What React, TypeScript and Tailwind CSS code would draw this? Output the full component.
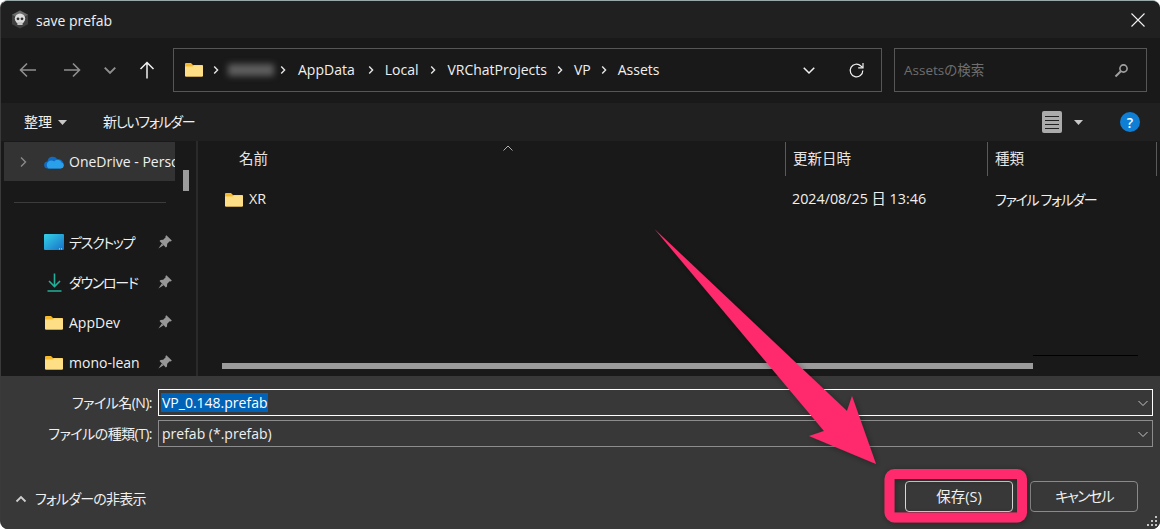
import React from "react";

function Folder({ w = 18, h = 15 }: { w?: number; h?: number }) {
  return (
    <svg className="shrink-0" width={w} height={h} viewBox="0 0 18 15">
      <path d="M0 2a1 1 0 0 1 1-1h5l2 2h9a1 1 0 0 1 1 1v9.5a1 1 0 0 1-1 1H1a1 1 0 0 1-1-1z" fill="#f5b92e" />
      <path d="M0 4.5h7.5L9 3.2h8a1 1 0 0 1 1 1v9.3a1 1 0 0 1-1 1H1a1 1 0 0 1-1-1z" fill="#ffdf85" />
    </svg>
  );
}

function PinIcon() {
  return (
    <svg className="shrink-0" width="14" height="14" viewBox="0 0 14 14">
      <path d="M8.4 0.2 13.8 5.6 12.8 6.6 11.7 6.3 9.2 8.8 9 11.4 7.9 12.5 1.5 6.1 2.6 5 5.2 4.8 7.7 2.3 7.4 1.2z" fill="#979797" />
      <path d="M3.8 8.4 0.4 13.6 5.6 10.2z" fill="#979797" />
    </svg>
  );
}

function Chevron({ dir = "down", size = 12, color = "#c8c8c8", sw = 1.2 }: { dir?: "down" | "up" | "right"; size?: number; color?: string; sw?: number }) {
  const d = dir === "down" ? "M1.5 4 6 8.5 10.5 4" : dir === "up" ? "M1.5 8.5 6 4 10.5 8.5" : "M4 1.5 8.5 6 4 10.5";
  return (
    <svg className="shrink-0" width={size} height={size} viewBox="0 0 12 12" fill="none" stroke={color} strokeWidth={sw}>
      <path d={d} />
    </svg>
  );
}

function Crumb({ children }: { children: React.ReactNode }) {
  return <span className="text-[14px] text-[#f0f0f0]">{children}</span>;
}

function Sep() {
  return (
    <span className="flex h-[10px] w-[6px] items-center justify-center">
      <svg width="6" height="10" viewBox="0 0 6 10" fill="none" stroke="#e6e6e6" strokeWidth="1.4">
        <path d="M1.2 1.5 4.6 5 1.2 8.5" />
      </svg>
    </span>
  );
}

function NavRow({ icon, label, kana }: { icon: React.ReactNode; label: string; kana?: boolean }) {
  return (
    <div className="flex h-[40px] items-center pl-[43px] pr-[4px]">
      <span className="flex w-[20px] justify-center">{icon}</span>
      <span className={`ml-[5px] w-[89px] whitespace-nowrap text-[14px] text-[#f0f0f0] [font-feature-settings:'palt'] ${kana ? "tracking-[-1.3px]" : ""}`}>{label}</span>
      <PinIcon />
    </div>
  );
}

function Field({ label, children, focused }: { label: string; children: React.ReactNode; focused?: boolean }) {
  return (
    <div className="flex h-[27px] items-center">
      <span className="w-[153px] whitespace-nowrap pr-[2px] text-right text-[14px] tracking-[-0.55px] text-[#f0f0f0] [font-feature-settings:'palt']">{label}</span>
      <div className={`ml-[4px] flex h-[27px] w-[995px] items-center justify-between border pl-[2px] pr-[3px] ${focused ? "border-white" : "border-[#8c8c8c]"}`}>
        {children}
        <Chevron size={12} color="#c4c4c4" sw={1} />
      </div>
    </div>
  );
}

export default function App() {
  return (
    <div
      className="relative flex h-[529px] w-[1160px] flex-col overflow-hidden rounded-[8px] border-t border-l border-t-[#9aa8a8] border-l-[#3a3a3a] bg-[#202020] text-white"
      style={{ fontFamily: '"Open Sans","Noto Sans","Noto Sans CJK JP",sans-serif' }}
    >
      {/* Title bar */}
      <div className="flex h-[37px] shrink-0 items-center bg-[#202020] pl-[10px] pr-[15px]">
        <svg width="18" height="19" viewBox="0 0 18 19">
          <path d="M9 0.5 17 4.8v9.4l-8 4.3-8-4.3V4.8z" fill="#3f3f3f" />
          <path d="M9 0.5 17 4.8 9 9 1 4.8z" fill="#6a6a6a" />
          <circle cx="9" cy="8.6" r="5.2" fill="#dcdcdc" />
          <rect x="6.4" y="12" width="5.2" height="3" fill="#c8c8c8" />
          <circle cx="7" cy="8.8" r="1.4" fill="#2f2f2f" />
          <circle cx="11" cy="8.8" r="1.4" fill="#2f2f2f" />
        </svg>
        <span className="ml-[7px] pt-[2px] text-[14px] text-[#f0f0f0]">save prefab</span>
        <svg className="ml-auto" width="14" height="14" viewBox="0 0 14 14" fill="none" stroke="#f0f0f0" strokeWidth="1.1">
          <path d="M0.5 0.5 13.5 13.5M13.5 0.5 0.5 13.5" />
        </svg>
      </div>

      {/* Navigation */}
      <div className="flex h-[65px] shrink-0 items-center bg-[#191919] pb-[1px] pl-[18px]">
        <svg className="shrink-0" width="18" height="16" viewBox="0 0 18 16" fill="none" stroke="#8f8f8f" strokeWidth="1.6"><path d="M17 8H1.5M8 1.5 1.5 8 8 14.5" /></svg>
        <svg className="ml-[26px] shrink-0" width="18" height="16" viewBox="0 0 18 16" fill="none" stroke="#8f8f8f" strokeWidth="1.6"><path d="M1 8h15.5M10 1.5 16.5 8 10 14.5" /></svg>
        <span className="ml-[22px]"><Chevron size={14} color="#8f8f8f" sw={1.7} /></span>
        <svg className="ml-[22px] shrink-0" width="16" height="18" viewBox="0 0 16 18" fill="none" stroke="#f0f0f0" strokeWidth="1.5"><path d="M8 17.5V1.5M1.5 8 8 1.5 14.5 8" /></svg>

        <div className="ml-[18px] flex h-[44px] w-[709px] shrink-0 items-center border border-[#565656] pl-[11px] pr-[16px]">
          <span className="flex items-center pb-[2px]"><Folder /></span>
          <span className="ml-[10px]"><Sep /></span>
          <span className="ml-[9px] h-[12px] w-[46px] bg-[#5e5e5e] blur-[3px]" />
          <span className="ml-[6px]"><Sep /></span>
          <span className="ml-[12px] pb-[3px]"><Crumb>AppData</Crumb></span>
          <span className="ml-[13px]"><Sep /></span>
          <span className="ml-[11px] pb-[3px]"><Crumb>Local</Crumb></span>
          <span className="ml-[12px]"><Sep /></span>
          <span className="ml-[11px] pb-[3px]"><Crumb>VRChatProjects</Crumb></span>
          <span className="ml-[10px]"><Sep /></span>
          <span className="ml-[11px] pb-[3px]"><Crumb>VP</Crumb></span>
          <span className="ml-[10px]"><Sep /></span>
          <span className="ml-[11px] pb-[3px]"><Crumb>Assets</Crumb></span>
          <span className="ml-auto"><Chevron size={14} color="#f0f0f0" sw={1.3} /></span>
          <svg className="ml-[32px] shrink-0" width="17" height="17" viewBox="0 0 17 17" fill="none" stroke="#f0f0f0" strokeWidth="1.2">
            <path d="M14.8 8.5a6.3 6.3 0 1 1-1.9-4.5L15 5.6" />
            <path d="M15 1v4.8h-4.8" />
          </svg>
        </div>

        <div className="ml-[12px] flex h-[44px] w-[253px] shrink-0 items-center border border-[#565656] pl-[9px] pr-[17px]">
          <span className="text-[13.5px] text-[#6e6e6e] [font-feature-settings:'palt']">Assetsの検索</span>
          <svg className="ml-auto" width="15" height="15" viewBox="0 0 15 15" fill="none" stroke="#a0a0a0" strokeWidth="1.6">
            <circle cx="9.5" cy="5.5" r="3.6" />
            <path d="M6.8 8.2 1.5 13.5" strokeWidth="2" />
          </svg>
        </div>
      </div>

      {/* Toolbar */}
      <div className="flex h-[38px] shrink-0 items-center bg-[#202020] pl-[23px] pr-[20px]">
        <span className="pb-[2px] text-[14px] text-[#f0f0f0]">整理</span>
        <svg className="ml-[6px]" width="9" height="5" viewBox="0 0 9 5"><path d="M0 0h9L4.5 5z" fill="#c8c8c8" /></svg>
        <span className="ml-[36px] pb-[2px] text-[14px] tracking-[-1.25px] text-[#f0f0f0] [font-feature-settings:'palt']">新しいフォルダー</span>
        <span className="ml-auto flex h-[22px] w-[20px] flex-col items-center justify-center gap-[3px] rounded-[2px] bg-[#ababab]">
          <span className="h-[1px] w-[14px] bg-[#222]" />
          <span className="h-[1px] w-[14px] bg-[#222]" />
          <span className="h-[1px] w-[14px] bg-[#222]" />
          <span className="h-[1px] w-[14px] bg-[#222]" />
        </span>
        <svg className="ml-[12px]" width="9" height="5" viewBox="0 0 9 5"><path d="M0 0h9L4.5 5z" fill="#c8c8c8" /></svg>
        <span className="ml-[37px] flex h-[20px] w-[20px] items-center justify-center rounded-full bg-[#0f7fd6] text-[14px] font-semibold text-white">?</span>
      </div>

      {/* Content */}
      <div className="flex h-[235px] shrink-0 bg-[#191919]">
        {/* Sidebar */}
        <div className="flex w-[197px] shrink-0 border-r-2 border-r-[#2a2a2a]">
          <div className="w-[175px] shrink-0 overflow-hidden">
            <div className="ml-[3px] mt-[1px] flex h-[39px] w-[171px] items-center overflow-hidden bg-[#333333] pl-[13px]">
              <span className="w-[27px] shrink-0"><Chevron dir="right" size={12} color="#8a8a8a" sw={1.4} /></span>
              <svg className="shrink-0" width="20" height="14" viewBox="0 0 20 14">
                <path d="M4 13.5a3.5 3.5 0 0 1-.6-7A5.5 5.5 0 0 1 13.6 4.4 4 4 0 0 1 16 13.5z" fill="#0f6cc4" />
                <path d="M4.5 13.5h12.5a3 3 0 0 0 .6-5.9 4.2 4.2 0 0 0-7.5-1.1A3.4 3.4 0 0 0 4.5 13.5z" fill="#2aa0ea" />
              </svg>
              <span className="ml-[5px] whitespace-nowrap text-[14px] text-[#f0f0f0]">OneDrive - Personal</span>
            </div>
            <div className="ml-[13px] mt-[21px] h-[1px] w-[152px] bg-[#3c3c3c]" />
            <div className="mt-[19px]">
              <NavRow
                kana
                label="デスクトップ"
                icon={
                  <svg width="20" height="16" viewBox="0 0 20 16">
                    <defs>
                      <linearGradient id="dk" x1="0" y1="0" x2="1" y2="1">
                        <stop offset="0" stopColor="#35d3e6" />
                        <stop offset="1" stopColor="#1670c8" />
                      </linearGradient>
                    </defs>
                    <rect width="20" height="16" rx="1" fill="url(#dk)" />
                    <rect x="15" y="14.4" width="1" height="1" fill="#bfeaff" />
                    <rect x="17" y="14.4" width="1" height="1" fill="#bfeaff" />
                  </svg>
                }
              />
              <NavRow
                kana
                label="ダウンロード"
                icon={
                  <svg width="15" height="19" viewBox="0 0 15 19" fill="none" stroke="#21b09a" strokeWidth="1.6">
                    <path d="M7.5 0.5V13M2 8l5.5 5.5L13 8M0.5 18h14" />
                  </svg>
                }
              />
              <NavRow label="AppDev" icon={<Folder />} />
              <NavRow label="mono-lean" icon={<Folder />} />
            </div>
          </div>
          <div className="flex flex-1 justify-center pt-[29px]">
            <span className="h-[21px] w-[6px] bg-[#9b9b9b]" />
          </div>
        </div>

        {/* File list */}
        <div className="relative flex min-w-0 flex-1 flex-col pt-[1px]">
          <span className="absolute left-[304px] top-[1px]"><Chevron dir="up" size={12} color="#b0b0b0" sw={1} /></span>
          <div className="flex h-[34px] shrink-0 text-[14.5px] text-[#e6e6e6]">
            <div className="flex w-[587px] items-center pl-[41px]">名前</div>
            <div className="flex w-[202px] items-center border-l border-l-[#5a5a5a] pl-[7px]">更新日時</div>
            <div className="flex w-[170px] items-center border-x border-x-[#5a5a5a] pl-[7px]">種類</div>
          </div>
          <div className="mt-[8px] flex h-[30px] items-center text-[14.3px] text-[#f0f0f0]">
            <div className="flex w-[587px] items-center pl-[27px]">
              <Folder />
              <span className="ml-[6px]">XR</span>
            </div>
            <div className="w-[202px] pl-[7px]">2024/08/25 日 13:46</div>
            <div className="pl-[8px] text-[14px] tracking-[-1.3px] [font-feature-settings:'palt']">ファイル フォルダー</div>
          </div>
          <div className="relative mb-[7px] mt-auto h-[6px]">
            <span className="absolute left-[24px] top-0 h-[6px] w-[811px] bg-[#9b9b9b]" />
            <span className="absolute -top-[8px] left-[835px] h-[1px] w-[105px] bg-[#000000]" />
          </div>
        </div>
      </div>

      {/* Bottom panel */}
      <div className="relative flex flex-1 flex-col bg-[#383838] pt-[13px]">
        <div className="flex flex-col gap-[4px]">
          <Field label="ファイル名(N):" focused>
            <span className="bg-[#0063b8] px-[1px] text-[14px] leading-[19px] text-white">VP_0.148.prefab</span>
          </Field>
          <Field label="ファイルの種類(T):">
            <span className="pl-[1px] text-[14px] text-[#f0f0f0]">prefab (*.prefab)</span>
          </Field>
        </div>
        <div className="mt-auto flex items-end justify-between pb-[17px] pl-[14px] pr-[22px]">
          <div className="flex items-center pb-[3px]">
            <Chevron dir="up" size={12} color="#d0d0d0" sw={1.8} />
            <span className="ml-[8px] text-[14px] tracking-[-0.8px] text-[#f0f0f0] [font-feature-settings:'palt']">フォルダーの非表示</span>
          </div>
          <div className="flex gap-[17px]">
            <button className="h-[31px] w-[108px] rounded-[4px] border border-[#d8d8d8] text-[14.5px] text-[#f0f0f0]">保存(S)</button>
            <button className="h-[31px] w-[108px] rounded-[4px] border border-[#8a8a8a] text-[14.5px] tracking-[-1.6px] text-[#f0f0f0] [font-feature-settings:'palt']">キャンセル</button>
          </div>
        </div>
        {/* Resize grip */}
        <svg className="absolute bottom-[3px] right-[3px]" width="10" height="12" viewBox="0 0 10 12" fill="#c4c4c4">
          <rect x="8" y="2" width="2" height="2" />
          <rect x="4" y="6" width="2" height="2" />
          <rect x="8" y="6" width="2" height="2" />
          <rect x="0" y="10" width="2" height="2" />
          <rect x="4" y="10" width="2" height="2" />
          <rect x="8" y="10" width="2" height="2" />
        </svg>
      </div>

      {/* Annotation overlay */}
      <svg className="pointer-events-none absolute -left-[1px] -top-[1px]" width="1160" height="529" viewBox="0 0 1160 529">
        <defs>
          <filter id="sh" x="-10%" y="-10%" width="130%" height="130%">
            <feDropShadow dx="1" dy="1" stdDeviation="3" floodColor="#000" floodOpacity="0.35" />
          </filter>
        </defs>
        <g filter="url(#sh)">
          <path d="M654.5 229 847 411 852 396 876 464 809 436 824 431z" fill="#ff2a6d" />
          <rect x="889.5" y="474" width="132.5" height="43.5" rx="5" fill="none" stroke="#ff2a6d" strokeWidth="10" />
        </g>
      </svg>
    </div>
  );
}
